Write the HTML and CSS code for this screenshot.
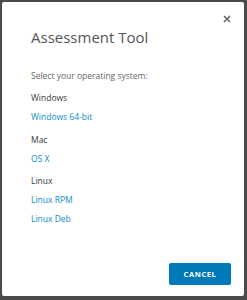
FILE: index.html
```html
<!DOCTYPE html>
<html>
<head>
<meta charset="utf-8">
<link rel="stylesheet" href="styles.css">
</head>
<body>
<div class="modal">
  <button class="close" aria-label="Close">
    <svg width="8" height="8" viewBox="0 0 8 8"><path d="M1 1L7 7M7 1L1 7" stroke="#666" stroke-width="1.6"/></svg>
  </button>
  <h1 class="title">Assessment Tool</h1>
  <p class="intro">Select your operating system:</p>
  <div class="group">
    <div class="os">Windows</div>
    <a class="link">Windows 64-bit</a>
  </div>
  <div class="group">
    <div class="os">Mac</div>
    <a class="link">OS X</a>
  </div>
  <div class="group">
    <div class="os">Linux</div>
    <a class="link">Linux RPM</a>
    <a class="link">Linux Deb</a>
  </div>
  <div class="footer">
    <button class="btn">CANCEL</button>
  </div>
</div>
</body>
</html>
```
FILE: styles.css
```css
html, body {
  margin: 0;
  padding: 0;
  background: #4a4a4a;
  height: 100%;
}
body {
  padding: 2px 3px 4px 2px;
  box-sizing: border-box;
  font-family: "Open Sans", sans-serif;
}
.modal {
  position: relative;
  background: #fff;
  border-radius: 2px;
  height: 294px;
  box-sizing: border-box;
  padding: 26px 13px 0 29px;
  display: flex;
  flex-direction: column;
}
.close {
  position: absolute;
  top: 12px;
  right: 12px;
  border: 0;
  background: none;
  padding: 0;
  width: 10px;
  height: 10px;
  display: flex;
  align-items: center;
  justify-content: center;
}
.title {
  margin: 0;
  font-size: 15px;
  font-weight: 500;
  color: #555;
  line-height: 18px;
}
.intro {
  margin: 24px 0 0;
  font-size: 8.5px;
  color: #666;
  line-height: 12px;
}
.group {
  display: flex;
  flex-direction: column;
  margin-top: 10px;
}
.group + .group {
  margin-top: 10.5px;
}
.os {
  font-size: 8.5px;
  color: #3a3a3a;
  font-weight: 500;
  line-height: 12px;
}
.link {
  font-size: 8.5px;
  color: #0a8dcc;
  line-height: 12px;
  margin-top: 7px;
}
.footer {
  margin-top: auto;
  display: flex;
  justify-content: flex-end;
  padding-bottom: 11px;
}
.btn {
  width: 62px;
  height: 22px;
  border: 0;
  border-radius: 2px;
  background: #0079b8;
  color: #fff;
  font-family: "Open Sans", sans-serif;
  font-size: 7.5px;
  font-weight: 700;
  letter-spacing: 0.6px;
  padding: 0;
}
```
